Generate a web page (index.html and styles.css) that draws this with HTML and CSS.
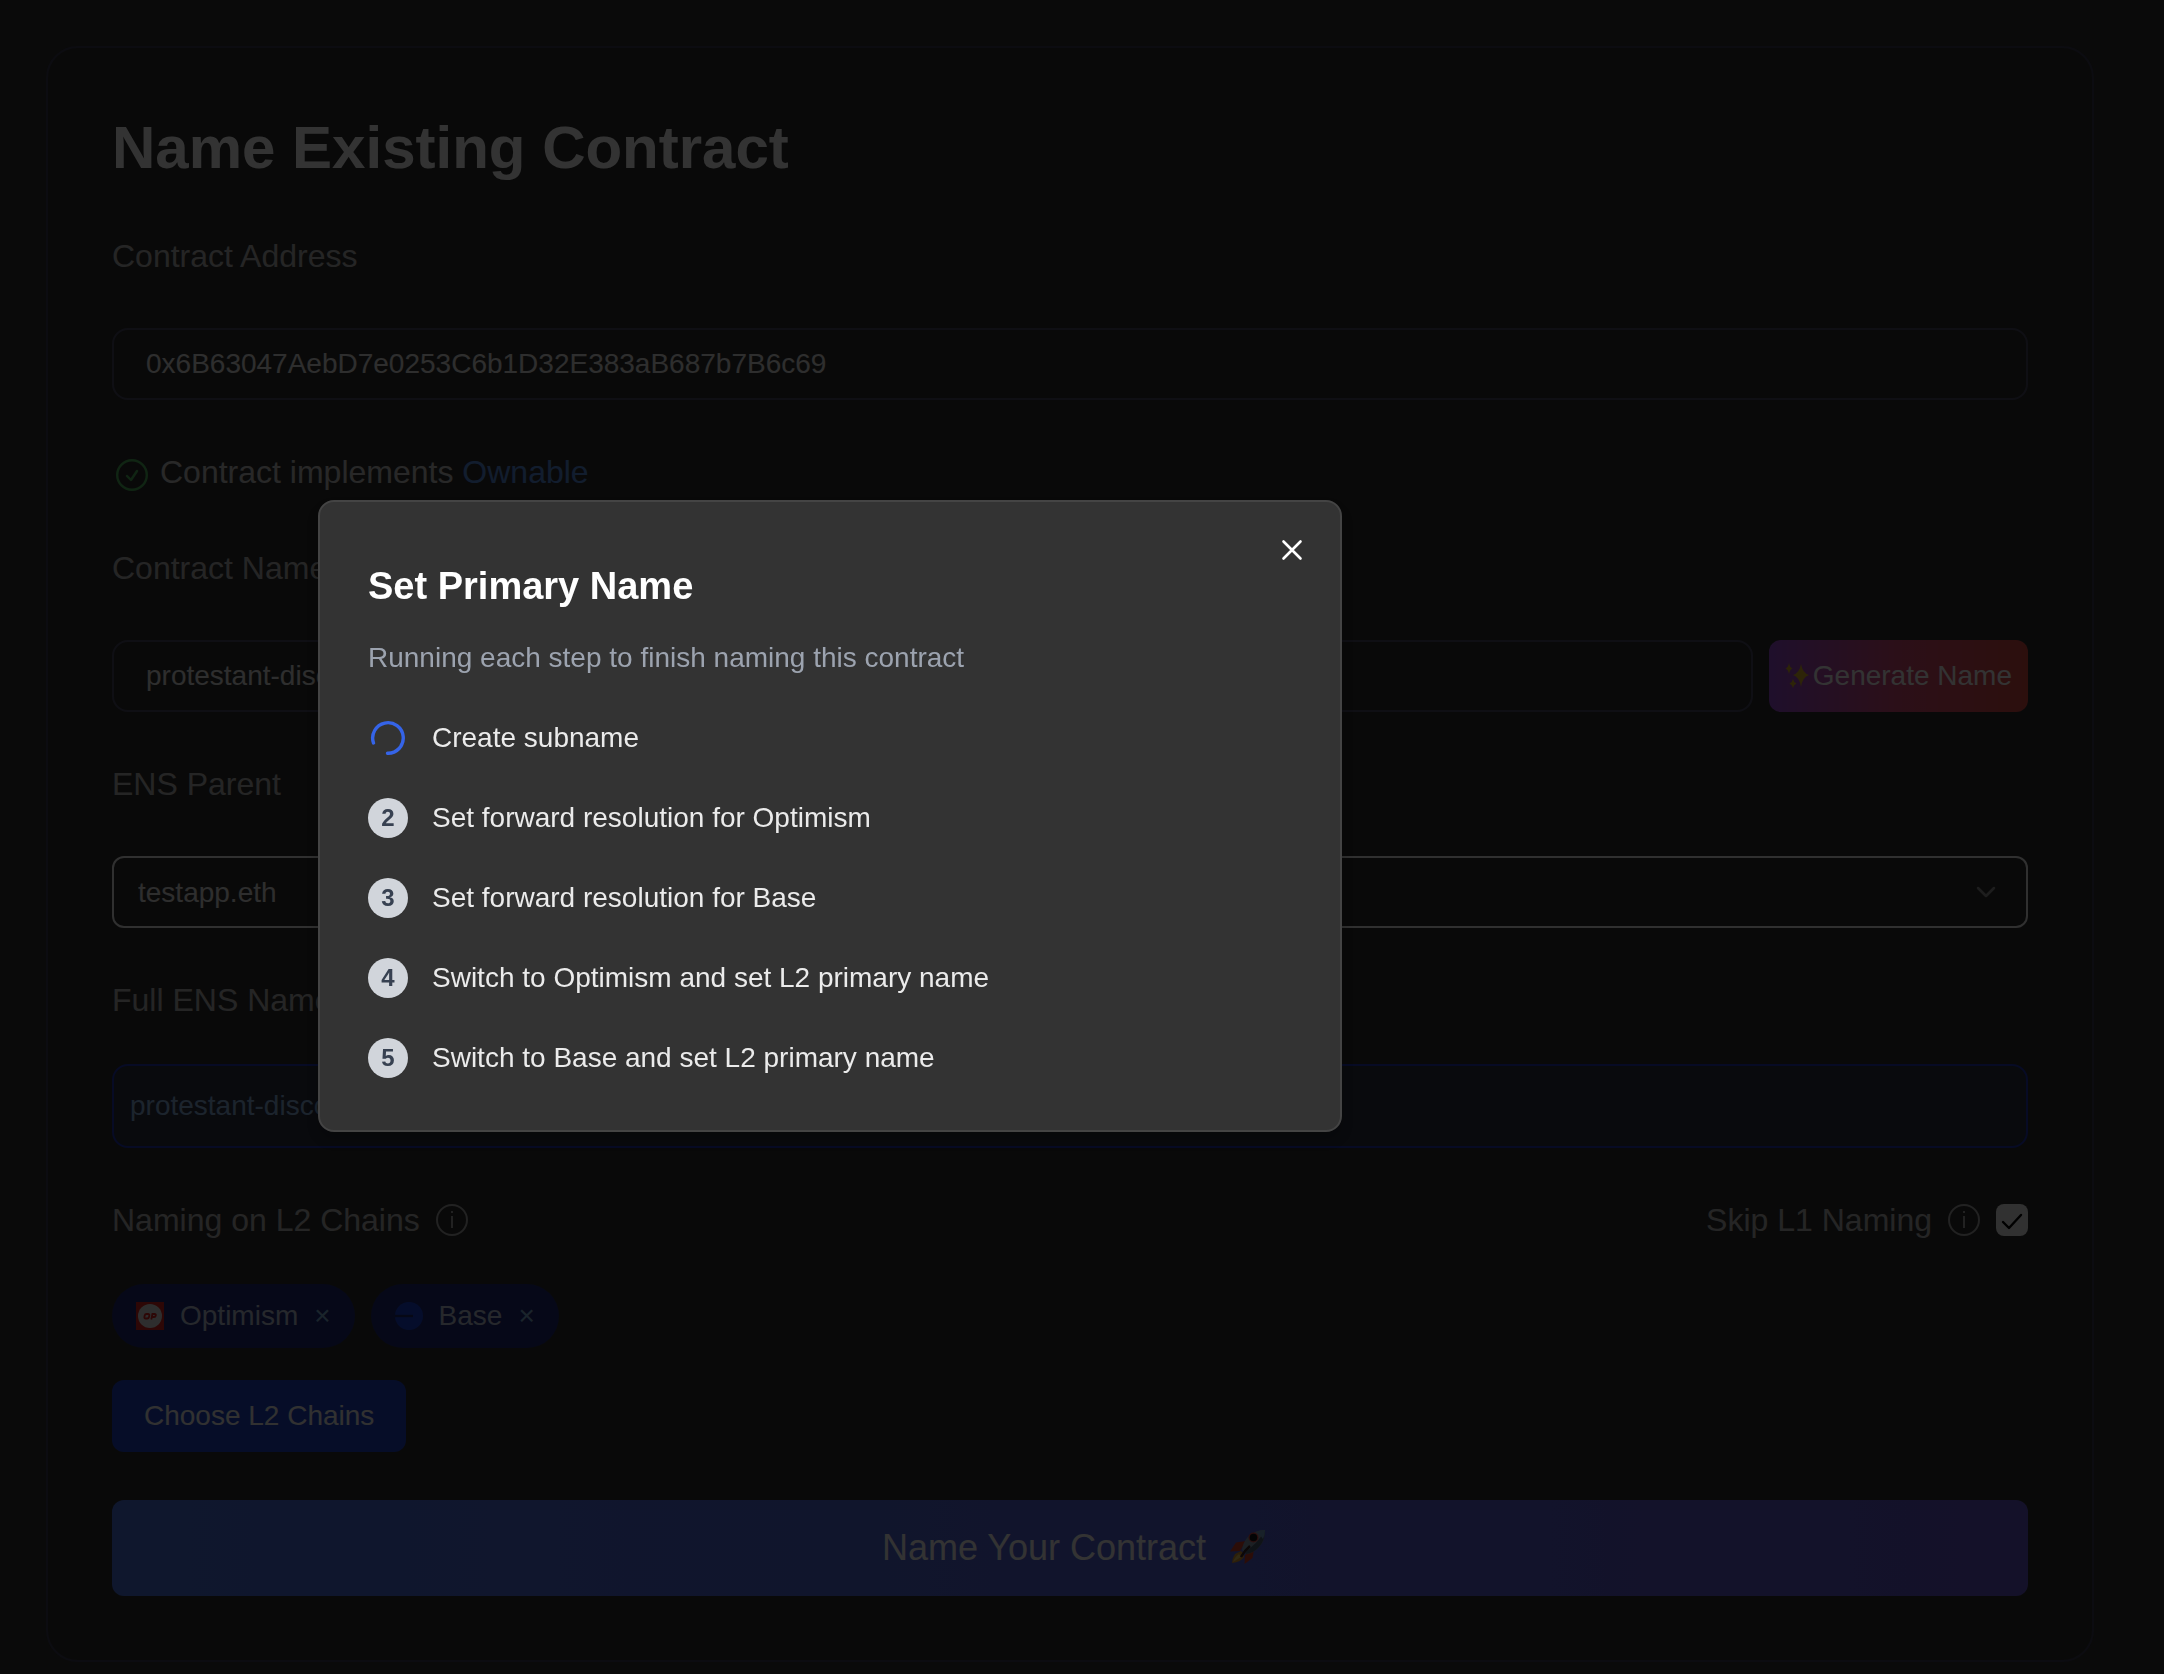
FILE: index.html
```html
<!DOCTYPE html>
<html lang="en">

<head>
  <meta charset="UTF-8">
  <meta name="viewport" content="width=device-width, initial-scale=1.0">
  <title>Name Existing Contract</title>
  <link rel="stylesheet" href="styles.css">
</head>

<body>
  <main class="card">
    <h1>Name Existing Contract</h1>

    <form class="contract-form">
      <label class="field-label" for="address">Contract Address</label>
      <input class="text-input" type="text" id="address" value="0x6B63047AebD7e0253C6b1D32E383aB687b7B6c69">

      <p class="status">
        <svg class="status-icon" viewBox="0 0 32 32" fill="none" stroke="currentColor" stroke-width="2.400">
          <circle cx="16" cy="16" r="14.800" />
          <path d="M11 17l4 4 6-9" stroke-linecap="round" stroke-linejoin="round" />
        </svg>
        <span>Contract implements <a href="#">Ownable</a></span>
      </p>

      <label class="field-label" for="contractName">Contract Name</label>
      <div class="name-row">
        <input class="text-input" type="text" id="contractName" value="protestant-disco">
        <button type="button" class="btn btn-generate">
          <svg class="sparkles" viewBox="0 0 28 28" fill="currentColor">
            <path d="M16 2q1.500 9 8 11q-6.500 2-8 12q-1.500-10-8-12q6.500-2 8-11z" />
            <path d="M4 1q.8 4.500 3.500 5.500q-2.700 1-3.500 5.500q-.8-4.500-3.500-5.500q2.700-1 3.500-5.500z" />
            <path d="M8 17q.8 3.500 3.500 4.500q-2.700 1-3.500 4.500q-.8-3.500-3.500-4.500q2.700-1 3.500-4.500z" />
          </svg>
          <span>Generate Name</span>
        </button>
      </div>

      <label class="field-label" for="ensParent">ENS Parent</label>
      <div class="select-wrap">
        <select id="ensParent">
          <option selected>testapp.eth</option>
        </select>
        <svg class="chevron" viewBox="0 0 20 12" fill="none" stroke="currentColor" stroke-width="2.500">
          <path d="M2 2l8 8 8-8" stroke-linecap="round" stroke-linejoin="round" />
        </svg>
      </div>

      <h2 class="field-label">Full ENS Name</h2>
      <div class="full-name">protestant-disco</div>

      <div class="l2-row">
        <h2 class="field-label">Naming on L2 Chains</h2>
        <svg class="info-icon" viewBox="0 0 32 32" fill="none" stroke="currentColor" stroke-width="2">
          <circle cx="16" cy="16" r="15" />
          <path d="M16 7v2M16 12v12" />
        </svg>
        <label class="field-label skip-label" for="skipL1">Skip L1 Naming</label>
        <svg class="info-icon" viewBox="0 0 32 32" fill="none" stroke="currentColor" stroke-width="2">
          <circle cx="16" cy="16" r="15" />
          <path d="M16 7v2M16 12v12" />
        </svg>
        <span class="check-wrap">
          <input type="checkbox" id="skipL1" checked>
          <svg class="check-mark" viewBox="0 0 32 32" fill="none" stroke="currentColor" stroke-width="2.400">
            <path d="M7 18l6 6 12-13" stroke-linecap="round" stroke-linejoin="round" />
          </svg>
        </span>
      </div>

      <div class="chips">
        <span class="chip">
          <svg class="chip-icon" viewBox="0 0 28 28">
            <rect width="28" height="28" fill="#e02420" />
            <circle cx="14" cy="14" r="12" fill="#e4e4e4" />
            <g fill="none" stroke="#e02420" stroke-width="1.800">
              <path d="M10.600 12h1.400q1.600 0 1.300 1.500l-.3 1.500q-.3 1.500-1.900 1.500h-1.400q-1.600 0-1.300-1.500l.3-1.500q.3-1.500 1.900-1.500z" />
              <path d="M15.300 17.500l1.100-5.500h2.200q1.500 0 1.200 1.500q-.3 1.500-1.800 1.500h-2" />
            </g>
          </svg>
          Optimism
          <button type="button" class="chip-remove" aria-label="Remove Optimism">×</button>
        </span>
        <span class="chip">
          <svg class="chip-icon" viewBox="0 0 28 28">
            <circle cx="14" cy="14" r="14" fill="#1a44d8" />
            <path d="M0 14h18" stroke="#1f2868" stroke-width="2.400" />
          </svg>
          Base
          <button type="button" class="chip-remove" aria-label="Remove Base">×</button>
        </span>
      </div>

      <button type="button" class="btn btn-choose">Choose L2 Chains</button>

      <button type="submit" class="btn btn-submit">
        <span>Name Your Contract</span>
        <svg class="rocket" viewBox="0 0 36 36">
          <path d="M16 11L6 12.500 0 21.500l10-.5zM24 20l-1.500 8-8 6 .5-9z" fill="#d8402c" />
          <path d="M11 21q3 2 3 6-3 5-12 6 0-4 3-9z" fill="#e09a30" />
          <path d="M9 24l2 3-8 5q1-4 6-8z" fill="#f4d060" />
          <path d="M35 0Q24 0 17 8q-4 5-5 12l4 4q8-1 13-7Q35 11 35 0z" fill="#8ba2b4" />
          <path d="M35 0Q35 11 29 17q-5 6-13 7l-2-2Q27 15 35 0z" fill="#4e6074" />
          <path d="M35 0q-5 0-9 2 5 3 7 7 2-4 2-9z" fill="#7aa6cc" />
          <circle cx="23.500" cy="7.500" r="5" fill="#d84a48" />
          <circle cx="23.500" cy="7.500" r="3.800" fill="#10151c" />
          <path d="M20 16q-5 4-9 11" fill="none" stroke="#3a2424" stroke-width="2.500" />
        </svg>
      </button>
    </form>
  </main>

  <div class="overlay"></div>

  <div class="modal" role="dialog" aria-labelledby="modalTitle">
    <button type="button" class="modal-close" aria-label="Close">
      <svg viewBox="0 0 24 24" fill="none" stroke="currentColor" stroke-width="2.600">
        <path d="M3.500 3.500l17 17M20.500 3.500l-17 17" stroke-linecap="round" />
      </svg>
    </button>
    <h2 class="modal-title" id="modalTitle">Set Primary Name</h2>
    <p class="modal-text">Running each step to finish naming this contract</p>
    <ol class="steps">
      <li>
        <svg class="spinner" viewBox="0 0 40 40" fill="none" stroke="currentColor" stroke-width="3.400">
          <path d="M5.500 25A15.300 15.300 0 1 1 19.500 35.300" stroke-linecap="round" />
        </svg>
        <span>Create subname</span>
      </li>
      <li><span class="step-number">2</span><span>Set forward resolution for Optimism</span></li>
      <li><span class="step-number">3</span><span>Set forward resolution for Base</span></li>
      <li><span class="step-number">4</span><span>Switch to Optimism and set L2 primary name</span></li>
      <li><span class="step-number">5</span><span>Switch to Base and set L2 primary name</span></li>
    </ol>
  </div>
</body>

</html>
```
FILE: styles.css
```css
* {
  box-sizing: border-box;
}

body {
  margin: 0;
  padding: 46px 70px 12px 46px;
  background: #323232;
  color: #fff;
  font-family: "Liberation Sans", Arial, sans-serif;
  font-size: 28px;
}

h1,
h2,
p,
ol {
  margin: 0;
  padding: 0;
}

button,
input,
select {
  font: inherit;
  color: inherit;
}

button {
  border: none;
  cursor: pointer;
}

.card {
  padding: 64px;
  border: 2px solid #3f3f54;
  border-radius: 32px;
  background: #303030;
}

h1 {
  margin-bottom: 48px;
  font-size: 60px;
  line-height: 72px;
}

.contract-form {
  display: flex;
  flex-direction: column;
  gap: 48px;
}

.field-label {
  color: #bbb;
  font-size: 32px;
  font-weight: normal;
  line-height: 48px;
}

.text-input {
  width: 100%;
  height: 72px;
  padding: 0 32px;
  border: 2px solid #4c4c66;
  border-radius: 16px;
  background: #2f2f2f;
  color: #e4e4e4;
}

/* Ownable check under the address */
.status {
  display: flex;
  align-items: center;
  gap: 12px;
  padding-left: 4px;
  color: #c8c8c8;
  font-size: 32px;
  line-height: 48px;
}

.status a {
  color: #5b93e6;
  text-decoration: none;
}

.status-icon {
  width: 32px;
  height: 32px;
  margin-top: 6px;
  color: #50b860;
}

.name-row {
  display: flex;
  gap: 16px;
}

.name-row .text-input {
  flex: 1;
}

.btn {
  height: 72px;
  border-radius: 12px;
}

.btn-generate {
  display: flex;
  align-items: center;
  padding: 0 16px;
  background: linear-gradient(to right, #9a4cd8, #d84a78, #dc4a42);
  white-space: nowrap;
}

.sparkles {
  width: 28px;
  height: 28px;
  color: #e0b428;
}

.select-wrap {
  display: grid;
  align-items: center;
}

.select-wrap select,
.chevron {
  grid-area: 1 / 1;
}

.select-wrap select {
  width: 100%;
  height: 72px;
  padding: 0 24px;
  border: 2px solid #eee;
  border-radius: 12px;
  appearance: none;
  background: #2f2f2f;
  color: #e4e4e4;
}

.chevron {
  width: 20px;
  height: 12px;
  margin-right: 32px;
  justify-self: end;
  color: #909090;
  pointer-events: none;
}

.full-name {
  height: 84px;
  margin-top: -8px;
  padding: 0 16px;
  border: 2px solid #2338b8;
  border-radius: 16px;
  background: #2d3244;
  color: #8cb4e0;
  line-height: 80px;
}

.l2-row {
  display: flex;
  align-items: center;
  gap: 16px;
}

.info-icon {
  width: 32px;
  height: 32px;
  color: #a8a8a8;
}

.skip-label {
  margin-left: auto;
}

.check-wrap {
  display: grid;
}

.check-wrap input,
.check-mark {
  grid-area: 1 / 1;
  width: 32px;
  height: 32px;
}

.check-wrap input {
  margin: 0;
  border-radius: 8px;
  appearance: none;
  background: #f4f4f4;
}

.check-mark {
  color: #000;
  pointer-events: none;
}

.chips {
  display: flex;
  gap: 16px;
  margin-top: -8px;
}

.chip {
  display: flex;
  align-items: center;
  gap: 16px;
  height: 64px;
  padding: 0 24px;
  border-radius: 32px;
  background: #202c78;
  color: #bcc8dc;
}

.chip-icon {
  width: 28px;
  height: 28px;
}

.chip-remove {
  padding: 0;
  background: none;
  color: #84b4d8;
}

.btn-choose {
  align-self: flex-start;
  margin-top: -16px;
  padding: 0 32px;
  background: #2044c8;
  color: #f4f4f4;
}

.btn-submit {
  display: flex;
  align-items: center;
  justify-content: center;
  gap: 24px;
  height: 96px;
  padding: 0 16px 0 24px;
  background: linear-gradient(to right, #4b73e0, #5566dc, #6456cc);
  font-size: 36px;
}

.rocket {
  width: 36px;
  height: 36px;
}

.overlay {
  position: fixed;
  inset: 0;
  background: rgba(0, 0, 0, 0.8);
}

/* Progress dialog */
.modal {
  position: absolute;
  top: 500px;
  left: 318px;
  width: 1024px;
  padding: 48px;
  border: 2px solid #444;
  border-radius: 16px;
  background: #333;
  box-shadow: 0 8px 12px rgba(0, 0, 0, 0.2);
}

.modal-close {
  position: absolute;
  top: 36px;
  right: 36px;
  width: 24px;
  height: 24px;
  padding: 0;
  background: none;
}

.modal-close svg {
  display: block;
}

.modal-title {
  font-size: 38px;
  line-height: 72px;
}

.modal-text {
  margin: 16px 0 36px;
  color: #9ca3af;
  line-height: 40px;
}

.steps {
  display: flex;
  flex-direction: column;
  gap: 32px;
  list-style: none;
}

.steps li {
  display: flex;
  align-items: center;
  gap: 24px;
  color: #ebebeb;
  line-height: 48px;
}

.spinner {
  width: 40px;
  height: 40px;
  color: #3564e8;
}

.step-number {
  width: 40px;
  height: 40px;
  border-radius: 50%;
  background: #d1d5db;
  color: #374151;
  font-size: 24px;
  font-weight: bold;
  line-height: 40px;
  text-align: center;
}
```
